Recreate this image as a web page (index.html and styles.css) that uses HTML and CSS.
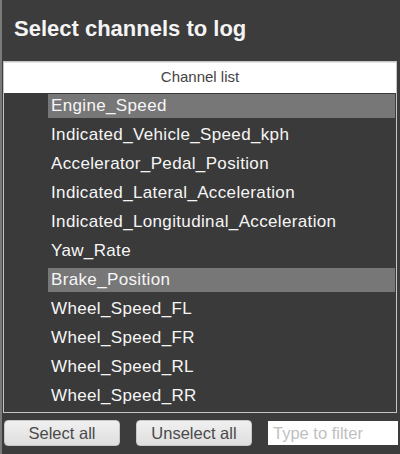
FILE: index.html
```html
<!DOCTYPE html>
<html>
<head>
    <title>Select channels to log</title>
    <link rel="stylesheet" href="styles.css">
</head>
<body>
    <div class="window">
        <h1 class="title">Select channels to log</h1>

        <div class="channel-box">
            <div class="channel-header">Channel list</div>
            <ul class="channel-list">
                <li class="selected">Engine_Speed</li>
                <li>Indicated_Vehicle_Speed_kph</li>
                <li>Accelerator_Pedal_Position</li>
                <li>Indicated_Lateral_Acceleration</li>
                <li>Indicated_Longitudinal_Acceleration</li>
                <li>Yaw_Rate</li>
                <li class="selected">Brake_Position</li>
                <li>Wheel_Speed_FL</li>
                <li>Wheel_Speed_FR</li>
                <li>Wheel_Speed_RL</li>
                <li>Wheel_Speed_RR</li>
            </ul>
        </div>

        <div class="toolbar">
            <button class="btn">Select all</button>
            <button class="btn">Unselect all</button>
            <input class="filter" type="text" placeholder="Type to filter">
        </div>
    </div>
</body>
</html>
```

FILE: styles.css
```css
body {
    margin: 0;
    padding: 0;
    background-color: #3c3c3c;
    font-family: "Liberation Sans", Arial, sans-serif;
}

.window {
    height: 454px;
    border-left: 2px solid #7a7a7a;
    background-color: #3c3c3c;
    box-sizing: border-box;
}

.title {
    margin: 0;
    height: 61px;
    padding-left: 12px;
    font-size: 22px;
    font-weight: bold;
    line-height: 58px;
    color: #f4f4f4;
    box-sizing: border-box;
}

.channel-box {
    margin: 0 3px 0 1px;
    height: 352px;
    border: 1px solid #c4c4c4;
    background-color: #3a3a3a;
    box-sizing: border-box;
}

.channel-header {
    height: 31px;
    border-top: 1px solid #e4e4e4;
    background-color: #fff;
    color: #444;
    font-size: 15px;
    text-align: center;
    line-height: 28px;
    box-sizing: border-box;
}

.channel-list {
    list-style: none;
    margin: 0;
    padding: 1px 1px 0 44px;
}

.channel-list li {
    height: 24px;
    margin-bottom: 5px;
    padding-left: 3px;
    font-size: 17px;
    letter-spacing: 0.35px;
    line-height: 24px;
    color: #f6f6f6;
}

.channel-list li.selected {
    background-color: #777;
}

.toolbar {
    display: flex;
    align-items: center;
    gap: 16px;
    padding: 7px 0 0 2px;
}

.btn {
    width: 116px;
    height: 26px;
    padding: 0;
    border: 1px solid #c8c8c8;
    border-radius: 4px;
    background: linear-gradient(#f0f0f0, #dedede);
    color: #4a4a4a;
    font-family: "Liberation Sans", Arial, sans-serif;
    font-size: 16.5px;
}

.filter {
    width: 130px;
    height: 24px;
    padding: 0 5px;
    border: none;
    background-color: #fff;
    font-family: "Liberation Sans", Arial, sans-serif;
    font-size: 16.5px;
    box-sizing: border-box;
}

.filter::placeholder {
    color: #c0c0c0;
}
```
